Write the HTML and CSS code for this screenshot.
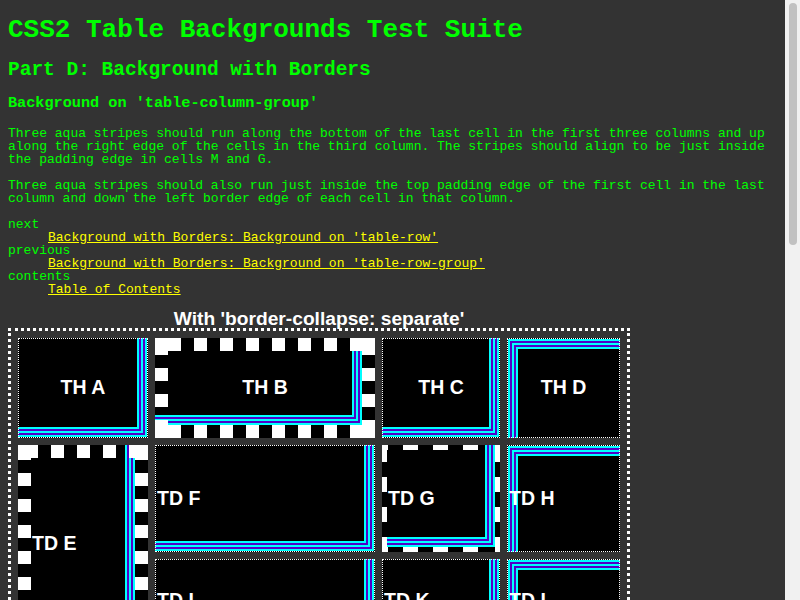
FILE: index.html
```html
<!DOCTYPE html>
<html>
<head>
<meta charset="utf-8">
<title>CSS2 Table Backgrounds Test Suite</title>
<link rel="stylesheet" href="styles.css">
</head>
<body>
<h1>CSS2 Table Backgrounds Test Suite</h1>
<h2>Part D: Background with Borders</h2>
<h3>Background on 'table-column-group'</h3>
<p>Three aqua stripes should run along the bottom of the last cell in the first three columns and up along the right edge of the cells in the third column. The stripes should align to be just inside the padding edge in cells M and G.</p>
<p>Three aqua stripes should also run just inside the top padding edge of the first cell in the last column and down the left border edge of each cell in that column.</p>
<dl>
<dt>next</dt>
<dd><a href="#">Background with Borders: Background on 'table-row'</a></dd>
<dt>previous</dt>
<dd><a href="#">Background with Borders: Background on 'table-row-group'</a></dd>
<dt>contents</dt>
<dd><a href="#">Table of Contents</a></dd>
</dl>
<table class="test">
<caption>With 'border-collapse: separate'</caption>
<colgroup><col><col><col></colgroup>
<colgroup><col></colgroup>
<thead>
<tr class="r1">
<th class="ca br">TH A</th>
<th class="cb sq thb">TH B</th>
<th class="cc br">TH C</th>
<th class="cd tl">TH D</th>
</tr>
</thead>
<tbody>
<tr class="r2">
<td class="sq tde" rowspan="2">TD E</td>
<td class="br">TD F</td>
<td class="dash">TD G</td>
<td class="tl">TD H</td>
</tr>
<tr class="r3">
<td class="br">TD I</td>
<td class="br">TD K</td>
<td class="tl">TD L</td>
</tr>
</tbody>
</table>
<div class="scrollbar" aria-hidden="true"><div class="thumb"></div></div>
</body>
</html>
```

FILE: styles.css
```css
:root {
  --ind: #5000c8;
  --aq: #0ff;
  --br:
    linear-gradient(#000, #000) right 10px bottom 10px / 2000px 2000px no-repeat,
    linear-gradient(var(--aq), var(--aq)) right 8px bottom 8px / 2000px 2000px no-repeat,
    linear-gradient(var(--ind), var(--ind)) right 6px bottom 6px / 2000px 2000px no-repeat,
    linear-gradient(var(--aq), var(--aq)) right 4px bottom 4px / 2000px 2000px no-repeat,
    linear-gradient(var(--ind), var(--ind)) right 2px bottom 2px / 2000px 2000px no-repeat,
    linear-gradient(var(--aq), var(--aq)) right 0 bottom 0 / 2000px 2000px no-repeat;
  --tl:
    linear-gradient(#000, #000) left 10px top 10px / 2000px 2000px no-repeat,
    linear-gradient(var(--aq), var(--aq)) left 8px top 8px / 2000px 2000px no-repeat,
    linear-gradient(var(--ind), var(--ind)) left 6px top 6px / 2000px 2000px no-repeat,
    linear-gradient(var(--aq), var(--aq)) left 4px top 4px / 2000px 2000px no-repeat,
    linear-gradient(var(--ind), var(--ind)) left 2px top 2px / 2000px 2000px no-repeat,
    linear-gradient(var(--aq), var(--aq)) left 0 top 0 / 2000px 2000px no-repeat;
  --corners:
    linear-gradient(#fff, #fff) 0 0 / 13px 13px no-repeat border-box,
    linear-gradient(#fff, #fff) 100% 0 / 13px 13px no-repeat border-box,
    linear-gradient(#fff, #fff) 0 100% / 13px 13px no-repeat border-box,
    linear-gradient(#fff, #fff) 100% 100% / 13px 13px no-repeat border-box;
  --corners5:
    linear-gradient(#fff, #fff) 0 0 / 6px 5px no-repeat border-box,
    linear-gradient(#fff, #fff) 100% 0 / 5px 5px no-repeat border-box,
    linear-gradient(#fff, #fff) 0 100% / 6px 5px no-repeat border-box,
    linear-gradient(#fff, #fff) 100% 100% / 5px 5px no-repeat border-box;
  --hdot: linear-gradient(to right, #fff 13px, transparent 13px);
  --vdot: linear-gradient(#fff 13px, transparent 13px);
  --hdash: repeating-linear-gradient(to right, #fff 0 15px, transparent 15px 30px);
  --vdash: repeating-linear-gradient(#fff 0 15px, transparent 15px 30px);
}

html {
  background: #333;
}

body {
  margin: 0 8px 8px;
  background: #333;
  color: #0f0;
  font-family: "Liberation Mono", monospace;
  font-size: 13px;
  line-height: 1;
}

h1 {
  font-size: 2em;
  margin: 0.67em 0;
}

h2 {
  font-size: 1.5em;
  margin: 0.83em 0;
}

h3 {
  font-size: 1.17em;
  margin: 1em 0;
}

p,
dl {
  margin: 1em 0;
}

dd {
  margin-left: 40px;
}

a {
  color: #ff0;
}

.test {
  border: 3px dotted #fff;
  border-spacing: 7px;
}

.test caption {
  font: bold 19.2px/1 "Liberation Sans", Arial, sans-serif;
  color: #fff;
}

.test th,
.test td {
  box-sizing: border-box;
  padding: 1px;
  border: 1px dotted #fff;
  font: bold 19.5px/1 "Liberation Sans", Arial, sans-serif;
  color: #fff;
  background-color: #000;
}

.test th {
  text-align: center;
}

.test td {
  text-align: left;
}

.ca { width: 130px; }
.cb { width: 220px; }
.cc { width: 118px; }
.cd { width: 113px; }

.r1 { height: 100px; }
.r2 { height: 107px; }
.r3 { height: 84px; }

.test .br {
  background: var(--br), #000;
}

.test .tl {
  background: var(--tl), #000;
}

.test .sq {
  border: 13px solid transparent;
}

.test .thb {
  background:
    var(--corners),
    var(--hdot) 13px 0 / 26px 13px repeat-x border-box,
    var(--hdot) 13px 100% / 26px 13px repeat-x border-box,
    var(--vdot) 0 4px / 13px 26px repeat-y border-box,
    var(--vdot) 100% 4px / 13px 26px repeat-y border-box,
    var(--br),
    #000;
}

.test .tde {
  background:
    var(--corners),
    var(--hdot) 7px 0 / 26px 13px repeat-x border-box,
    var(--hdot) 7px 100% / 26px 13px repeat-x border-box,
    var(--vdot) 0 2px / 13px 26px repeat-y border-box,
    var(--vdot) 100% 2px / 13px 26px repeat-y border-box,
    var(--br),
    #000;
}

.test .dash {
  border: 5px solid transparent;
  background:
    var(--corners5),
    var(--hdash) 21px 0 / 75px 5px no-repeat border-box,
    var(--hdash) 21px 100% / 75px 5px no-repeat border-box,
    var(--vdash) 0 2px / 5px 105px no-repeat border-box,
    var(--vdash) 100% 2px / 5px 105px no-repeat border-box,
    var(--br),
    #000;
}

.scrollbar {
  position: fixed;
  top: 0;
  right: 0;
  width: 15px;
  height: 100%;
  background: #f1f1f1;
  box-sizing: border-box;
  padding: 3px 3px 0 4px;
}

.thumb {
  height: 242px;
  border-radius: 4px;
  background: #c1c1c1;
}
```
